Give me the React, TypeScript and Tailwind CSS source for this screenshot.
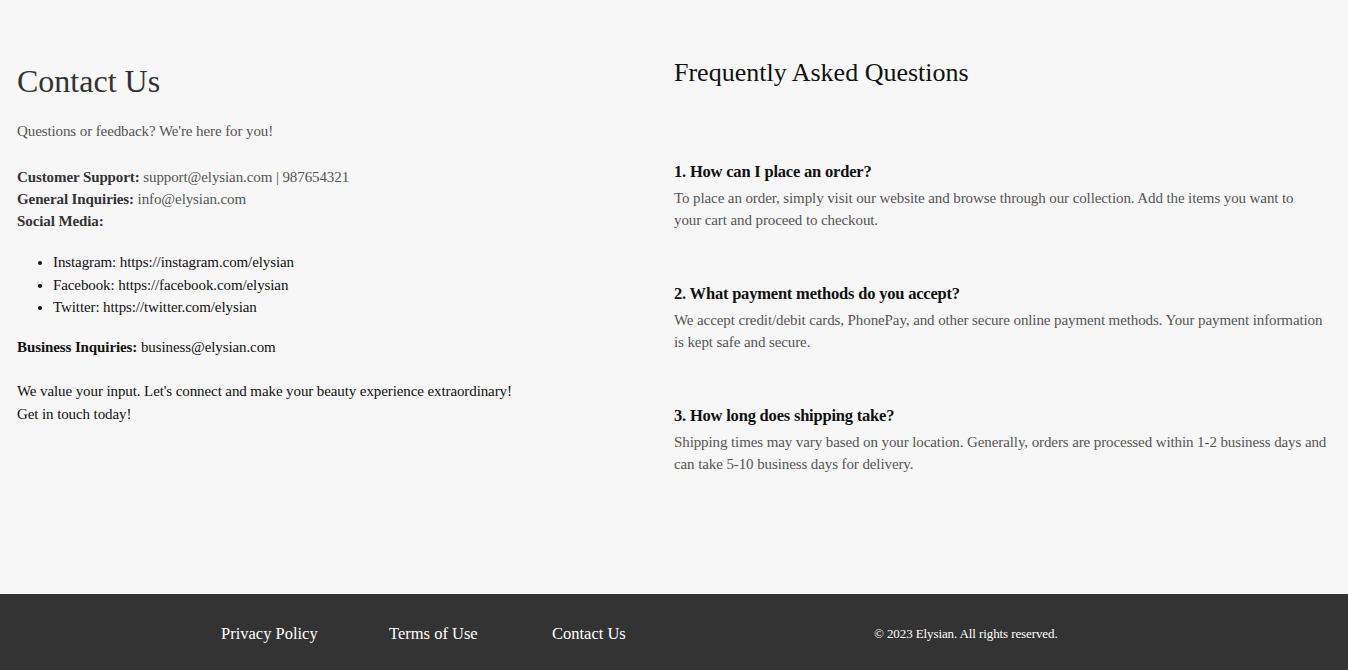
// Contact page: contact details on the left, FAQ on the right, dark footer.

const serif = "font-['Liberation_Serif','Times_New_Roman',serif]";

const faqs = [
  {
    q: "1. How can I place an order?",
    a: [
      "To place an order, simply visit our website and browse through our collection. Add the items you want to",
      "your cart and proceed to checkout.",
    ],
  },
  {
    q: "2. What payment methods do you accept?",
    a: [
      "We accept credit/debit cards, PhonePay, and other secure online payment methods. Your payment information",
      "is kept safe and secure.",
    ],
  },
  {
    q: "3. How long does shipping take?",
    a: [
      "Shipping times may vary based on your location. Generally, orders are processed within 1-2 business days and",
      "can take 5-10 business days for delivery.",
    ],
  },
];

function ContactInfo() {
  return (
    <section className="px-[17px] pt-[62px] tracking-[-0.1px]">
      <h1 className="text-[32px] leading-[38px] tracking-normal text-[#333]">Contact Us</h1>
      <p className="mt-[20px] text-[15px] leading-[22px] text-[#555]">
        Questions or feedback? We're here for you!
      </p>

      <div className="mt-[24px] text-[15px] leading-[22px] text-[#555]">
        <p>
          <strong className="font-bold text-[#333]">Customer Support:</strong> support@elysian.com | 987654321
        </p>
        <p>
          <strong className="font-bold text-[#333]">General Inquiries:</strong> info@elysian.com
        </p>
        <p>
          <strong className="font-bold text-[#333]">Social Media:</strong>
        </p>
      </div>

      <ul className="mt-[19px] list-disc pl-9 text-[15px] leading-[22.5px] text-[#111]">
        <li>Instagram: https://instagram.com/elysian</li>
        <li>Facebook: https://facebook.com/elysian</li>
        <li>Twitter: https://twitter.com/elysian</li>
      </ul>

      <p className="mt-[17px] text-[15px] leading-[22px] text-[#111]">
        <strong className="font-bold">Business Inquiries:</strong> business@elysian.com
      </p>

      <p className="mt-[22px] text-[15px] leading-[23px] text-[#111]">
        We value your input. Let's connect and make your beauty experience extraordinary!
        <br />
        Get in touch today!
      </p>
    </section>
  );
}

function Faq() {
  return (
    <section className="pr-[10px] pt-[57px]">
      <h2 className="text-[26px] leading-[32px] text-[#111]">Frequently Asked Questions</h2>
      <div className="mt-[72px] flex flex-col gap-[52px]">
        {faqs.map((f) => (
          <div key={f.q}>
            <h3 className="text-[16.5px] font-bold leading-[22px] tracking-[-0.2px] text-[#111]">{f.q}</h3>
            <p className="mt-[4px] whitespace-nowrap text-[15px] leading-[22px] tracking-[-0.1px] text-[#555]">
              {f.a[0]}
              <br />
              {f.a[1]}
            </p>
          </div>
        ))}
      </div>
    </section>
  );
}

function Footer() {
  return (
    <footer className="flex h-[76px] items-center bg-[#333] pt-[4px] text-white">
      <nav className="flex w-[874px] pl-[221px] text-[16.5px]">
        <a href="#" className="w-[168px]">Privacy Policy</a>
        <a href="#" className="w-[163px]">Terms of Use</a>
        <a href="#">Contact Us</a>
      </nav>
      <p className="text-[13px] tracking-[-0.1px]">© 2023 Elysian. All rights reserved.</p>
    </footer>
  );
}

export default function App() {
  return (
    <div className={`${serif} min-h-screen bg-[#f7f7f7]`}>
      <main className="grid grid-cols-2 pb-[119px]">
        <ContactInfo />
        <Faq />
      </main>
      <Footer />
    </div>
  );
}
